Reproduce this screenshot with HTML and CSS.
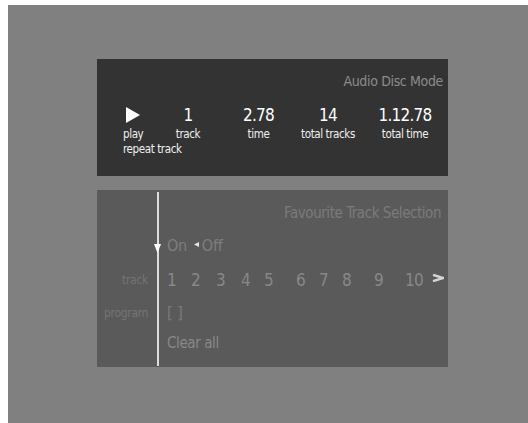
FILE: index.html
```html
<!DOCTYPE html>
<html lang="en">
<head>
<meta charset="utf-8">
<title>Audio Disc Mode</title>
<link rel="stylesheet" href="styles.css">
</head>
<body>
<div class="stage">
  <section class="panel status">
    <h1 class="mode">Audio Disc Mode</h1>
    <div class="readout">
      <div class="val play-cell"><svg class="play-icon" viewBox="0 0 14 16" width="14" height="16"><polygon points="0,0 14,8 0,16" fill="#ffffff"/></svg></div>
      <div class="val">1</div>
      <div class="val">2.78</div>
      <div class="val">14</div>
      <div class="val">1.12.78</div>
      <div class="lbl left">play</div>
      <div class="lbl">track</div>
      <div class="lbl">time</div>
      <div class="lbl">total tracks</div>
      <div class="lbl">total time</div>
    </div>
    <div class="repeat">repeat track</div>
  </section>

  <section class="panel favourites">
    <div class="rule"></div>
    <h2 class="fav-title">Favourite Track Selection</h2>
    <div class="toggle">
      <svg class="marker" viewBox="0 0 7 9" width="7" height="9"><polygon points="0,0 7,0 3.5,9" fill="#ffffff"/></svg>
      <span class="opt">On</span>
      <svg class="pointer" viewBox="0 0 5 5" width="5" height="5"><polygon points="5,0 5,5 0,2.5" fill="#e6e6e6"/></svg>
      <span class="opt">Off</span>
    </div>
    <div class="side side-track">track</div>
    <div class="tracks">
      <span>1</span><span>2</span><span>3</span><span>4</span><span>5</span><span>6</span><span>7</span><span>8</span><span>9</span><span>10</span>
      <svg class="next" viewBox="0 0 12 8" width="12" height="8"><path d="M1 0.8 L11 4 L1 7.2" fill="none" stroke="#d4d4d4" stroke-width="2.4" stroke-linejoin="miter"/></svg>
    </div>
    <div class="side side-program">program</div>
    <div class="program">[ ]</div>
    <div class="clear">Clear all</div>
  </section>
</div>
</body>
</html>
```

FILE: styles.css
```css
html, body {
  margin: 0;
  padding: 0;
  background: #ffffff;
}

body {
  font-family: "DejaVu Sans Condensed", "Liberation Sans Narrow", "Arial Narrow", sans-serif;
}

.stage {
  margin: 5px 0 0 8px;
  min-height: 418px;
  background: #808080;
  padding: 54px 0 0 89px;
  box-sizing: border-box;
}

.panel {
  width: 351px;
  box-sizing: border-box;
}

/* ---------- status panel ---------- */
.status {
  background: #333333;
  height: 117px;
  padding: 12px 5px 0 26px;
}

.mode {
  margin: 0;
  font-weight: normal;
  font-size: 14px;
  letter-spacing: -0.35px;
  line-height: 20px;
  color: #8c8c8c;
  text-align: right;
}

.readout {
  display: grid;
  grid-template-columns: 30px 70px 71px 68px 86px;
  grid-template-rows: 24px 15px;
  margin-top: 12px;
}

.val {
  font-size: 17px;
  letter-spacing: -0.8px;
  line-height: 24px;
  color: #ffffff;
  text-align: center;
  white-space: nowrap;
}

.play-cell {
  text-align: left;
}

.play-icon {
  display: block;
  margin: 4px 0 0 3px;
}

.lbl {
  font-size: 11.5px;
  letter-spacing: -0.4px;
  line-height: 15px;
  color: #f0f0f0;
  text-align: center;
  white-space: nowrap;
}

.lbl.left {
  text-align: left;
}

.repeat {
  font-size: 11.5px;
  letter-spacing: -0.4px;
  line-height: 15px;
  color: #f0f0f0;
}

/* ---------- favourites panel ---------- */
.favourites {
  margin-top: 14px;
  background: #5a5a5a;
  height: 177px;
  padding: 2px 8px 1px 0;
  display: grid;
  grid-template-columns: 60px 2px 1fr;
  grid-template-rows: 31px 33px 36px 33px 28px 13px;
  align-items: end;
}

.rule {
  grid-column: 2;
  grid-row: 1 / -1;
  align-self: stretch;
  background: #dcdcdc;
}

.fav-title {
  grid-column: 3;
  grid-row: 1;
  margin: 0;
  padding-right: 3px;
  font-weight: normal;
  font-size: 15px;
  letter-spacing: -0.45px;
  line-height: 20px;
  color: #7a7a7a;
  text-align: right;
}

.toggle {
  grid-column: 3;
  grid-row: 2;
  position: relative;
  display: flex;
  align-items: flex-start;
  padding-left: 8px;
  height: 20px;
}

.marker {
  position: absolute;
  left: -5px;
  top: 8px;
}

.opt {
  font-size: 16px;
  letter-spacing: -0.3px;
  line-height: 20px;
  color: #7e7e7e;
}

.pointer {
  margin: 6px 3px 0 7px;
}

.side {
  grid-column: 1;
  padding-right: 9px;
  font-size: 12px;
  letter-spacing: -0.3px;
  line-height: 24px;
  color: #747474;
  text-align: right;
}

.side-track {
  grid-row: 3;
}

.side-program {
  grid-row: 4;
}

.tracks {
  grid-column: 3;
  grid-row: 3;
  padding-left: 8px;
  display: grid;
  grid-template-columns: 24px 25px 25px 23px 32px 23px 23px 32px 31px 27px auto;
  align-items: start;
  font-size: 17px;
  letter-spacing: -0.8px;
  line-height: 24px;
  color: #888888;
}

.next {
  display: block;
  margin-top: 6px;
}

.program {
  grid-column: 3;
  grid-row: 4;
  padding-left: 8px;
  font-size: 16px;
  line-height: 24px;
  color: #7a7a7a;
}

.clear {
  grid-column: 3;
  grid-row: 5;
  padding-left: 8px;
  font-size: 15px;
  letter-spacing: -0.4px;
  line-height: 20px;
  color: #888888;
}
```
